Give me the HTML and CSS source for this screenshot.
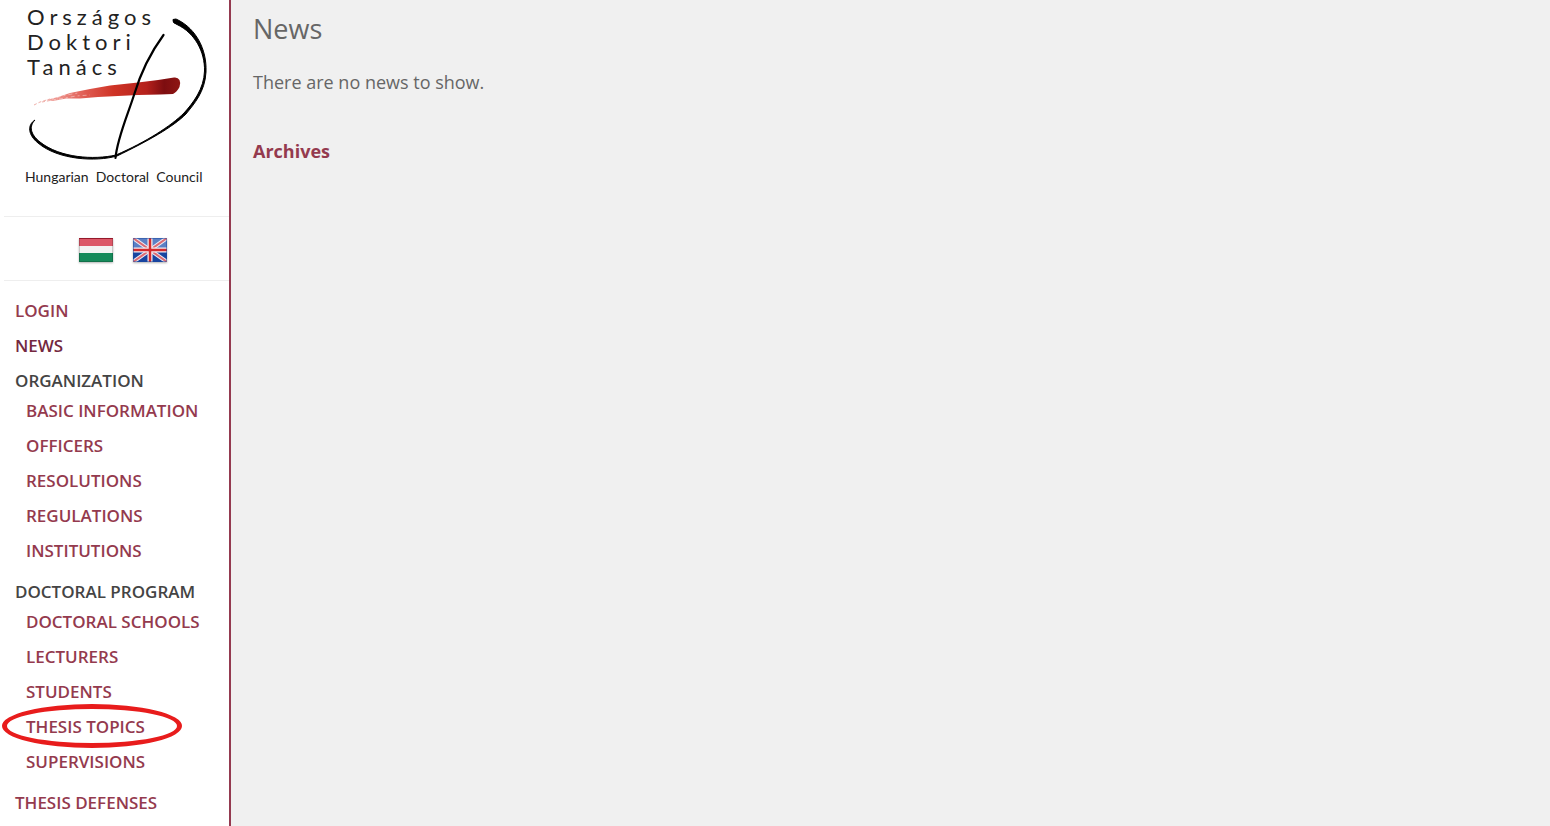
FILE: index.html
```html
<!DOCTYPE html>
<html lang="en">
<head>
    <meta charset="UTF-8">
    <meta name="viewport" content="width=device-width, initial-scale=1.0">
    <title>Hungarian Doctoral Council</title>
    <link rel="stylesheet" href="styles.css">
</head>
<body>
    <div class="page">
        <aside class="sidebar">
            <a class="logo" href="#">
                <svg width="225" height="216" viewBox="4 0 225 216" role="img" aria-label="Országos Doktori Tanács">
                    <defs>
                        <linearGradient id="brush" x1="0" x2="1" y1="0" y2="0">
                            <stop offset="0" stop-color="#f4a9a4"/>
                            <stop offset="0.3" stop-color="#df5a50"/>
                            <stop offset="0.5" stop-color="#cf3426"/>
                            <stop offset="0.75" stop-color="#b5211c"/>
                            <stop offset="0.88" stop-color="#7d0d10"/>
                            <stop offset="1" stop-color="#8f1614"/>
                        </linearGradient>
                    </defs>
                    <g class="logo-title">
                        <text x="27" y="25">Országos</text>
                        <text x="27" y="50">Doktori</text>
                        <text x="27" y="75">Tanács</text>
                    </g>
                    <path fill="url(#brush)" d="M46 100 L58 97 L70 93 L90 89 L110 85.500 L138 82.500 L158 80 L174 77.500 Q178 77 179.500 80 Q181 83 179.500 87 Q177 92 173 94 L160 94.500 L138 95 L118 96 L98 97 L80 98.500 L66 98.500 L53 101 Z"/>
                    <path fill="none" stroke="#efb0aa" stroke-dasharray="3 2" d="M34 105 L40 102 L50 99 M42 102 L58 99"/>
                    <path fill="none" stroke="#fff" stroke-opacity="0.4" stroke-dasharray="2 3 4 3" d="M52 99 L66 95 L78 93 M54 100 L76 96 L90 95"/>
                    <path d="M173 19.500 Q176 18 179 20.500 C195 29 207 48 206 72 C205 92 194 104 186 114 C173 127 148 141 117 156 C96 162 58 160 38 143 C28 135 27 125 35 120 C29 126 30 134 40 142 C60 158 94 160 116 155 C146 142 171 126 184 113 C193 103 204 89 204.500 71 C205 52 195 33 177 24.500 Q172 23 173 19.500 Z" stroke="#000"/>
                    <path d="M163.500 35 C151 52 140 75 134 95 C128 114 117 139 115.500 158" fill="none" stroke="#000" stroke-width="2.200" stroke-linecap="round"/>
                    <text class="logo-subtitle" x="25" y="182">Hungarian&nbsp; Doctoral&nbsp; Council</text>
                </svg>
            </a>
            <div class="languages">
                <a href="#" aria-label="Magyar">
                    <svg class="flag" width="34" height="24" viewBox="0 0 34 24">
                        <path fill="#dc5868" d="M0 0h34v8H0z"/>
                        <path fill="#f3f3f3" d="M0 8h34v7H0z"/>
                        <path fill="#168a5b" d="M0 15h34v9H0z"/>
                        <path fill="#b71f35" d="M0 0h34v1H0z"/>
                        <path fill="none" stroke="#000" stroke-opacity="0.18" d="M.5.5h33v23H.5z"/>
                    </svg>
                </a>
                <a href="#" aria-label="English">
                    <svg class="flag" width="34" height="24" viewBox="0 0 34 24">
                        <path fill="#5c80c4" d="M0 0h34v12H0z"/>
                        <path fill="#1845a0" d="M0 12h34v12H0z"/>
                        <path fill="none" stroke="#e9eaf4" stroke-width="4" d="M0 0l34 24M34 0L0 24"/>
                        <path fill="none" stroke="#dc6a72" stroke-width="2" d="M0 0l34 24M34 0L0 24"/>
                        <path fill="none" stroke="#f3eef2" stroke-width="5" d="M17 0v24M0 12h34"/>
                        <path fill="none" stroke="#d42a2c" stroke-width="2.500" d="M17 0v24M0 12h34"/>
                        <path fill="none" stroke="#1845a0" stroke-opacity="0.5" d="M.5.5h33v23H.5z"/>
                    </svg>
                </a>
            </div>
            <nav>
                <ul class="menu">
                    <li><a href="#">Login</a></li>
                    <li><a class="active" href="#">News</a></li>
                    <li>
                        <span class="menu-title">Organization</span>
                        <ul class="submenu">
                            <li><a href="#">Basic information</a></li>
                            <li><a href="#">Officers</a></li>
                            <li><a href="#">Resolutions</a></li>
                            <li><a href="#">Regulations</a></li>
                            <li><a href="#">Institutions</a></li>
                        </ul>
                    </li>
                    <li>
                        <span class="menu-title">Doctoral program</span>
                        <ul class="submenu">
                            <li><a href="#">Doctoral schools</a></li>
                            <li><a href="#">Lecturers</a></li>
                            <li><a href="#">Students</a></li>
                            <li class="marked">
                                <a href="#">Thesis topics</a>
                                <span class="marker"></span>
                            </li>
                            <li><a href="#">Supervisions</a></li>
                        </ul>
                    </li>
                    <li><a href="#">Thesis defenses</a></li>
                </ul>
            </nav>
        </aside>
        <main class="content">
            <h1>News</h1>
            <p>There are no news to show.</p>
            <a class="archives" href="#">Archives</a>
        </main>
    </div>
</body>
</html>
```

FILE: styles.css
```css
* {
    box-sizing: border-box;
}

body {
    margin: 0;
    font-family: "Open Sans", sans-serif;
    font-size: 18px;
    color: #666;
    background-color: #f0f0f0;
}

a {
    color: #943a4e;
    text-decoration: none;
}

a:hover {
    color: #6e1c2e;
}

.page {
    display: flex;
    min-height: 100vh;
}

/* Sidebar */
.sidebar {
    flex: none;
    width: 231px;
    padding-left: 4px;
    background-color: #fff;
    border-right: 2px solid #943a50;
}

.logo,
.logo svg {
    display: block;
}

.logo-title {
    font-family: "Century Gothic", Lato, sans-serif;
    font-size: 22px;
    letter-spacing: 5px;
    fill: #222;
}

.logo-subtitle {
    font-family: "Century Gothic", Lato, sans-serif;
    font-size: 14px;
    fill: #222;
}

.languages {
    display: flex;
    justify-content: center;
    gap: 20px;
    padding: 21px 0 18px 13px;
    border-top: 1px solid #eee;
    border-bottom: 1px solid #eee;
}

.flag {
    display: block;
    box-shadow: 0 1px 2px rgba(0, 0, 0, 0.3);
}

/* Menu */
.menu,
.submenu {
    margin: 0;
    padding: 0;
    list-style: none;
}

.menu {
    padding: 12px 0 0 11px;
    font-size: 17px;
    font-weight: 600;
    line-height: 25px;
    text-transform: uppercase;
}

.menu a {
    display: block;
    padding: 5px 0;
}

.menu a.active {
    color: #742840;
}

.menu-title {
    display: block;
    padding-top: 5px;
    color: #444;
}

.submenu {
    padding-left: 11px;
    margin-bottom: 6px;
}

.marked {
    position: relative;
}

.marker {
    position: absolute;
    top: -5px;
    left: -24px;
    width: 180px;
    height: 44px;
    border: 5px solid #e81c1c;
    border-radius: 50%;
    pointer-events: none;
}

/* Content */
.content {
    flex: 1;
    padding: 10px 22px;
}

h1 {
    margin: 0 0 21px;
    font-size: 27px;
    font-weight: normal;
    line-height: 38px;
}

p {
    margin: 0 0 43px;
    line-height: 26px;
}

.archives {
    font-weight: bold;
    line-height: 26px;
}
```
